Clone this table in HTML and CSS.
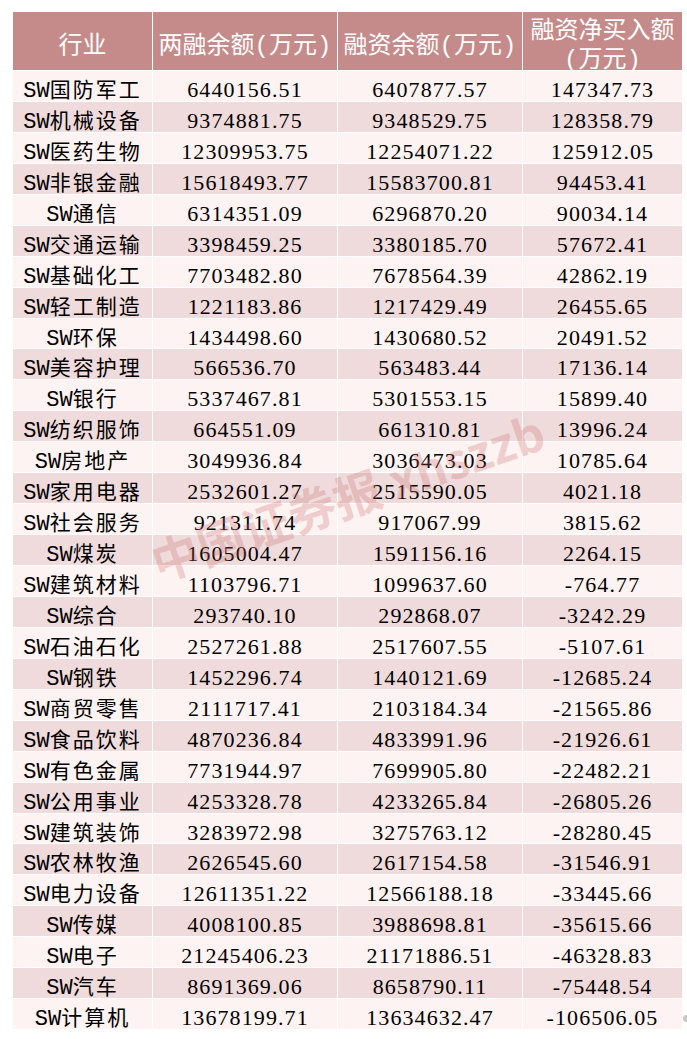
FILE: index.html
```html
<!DOCTYPE html>
<html lang="zh-CN">
<head>
<meta charset="utf-8">
<title>行业两融数据</title>
<link rel="stylesheet" href="styles.css">
</head>
<body>
<div class="wrap">
<table class="data">
<thead>
<tr class="head">
<th class="c1 one">行业</th>
<th class="c2 one">两融余额(万元)</th>
<th class="c3 one">融资余额(万元)</th>
<th class="c4"><div class="two">融资净买入额<br>(万元)</div></th>
</tr>
</thead>
<tbody>
<tr><td class="name"><span class="sw">SW</span>国防军工</td><td>6440156.51</td><td>6407877.57</td><td>147347.73</td></tr>
<tr><td class="name"><span class="sw">SW</span>机械设备</td><td>9374881.75</td><td>9348529.75</td><td>128358.79</td></tr>
<tr><td class="name"><span class="sw">SW</span>医药生物</td><td>12309953.75</td><td>12254071.22</td><td>125912.05</td></tr>
<tr><td class="name"><span class="sw">SW</span>非银金融</td><td>15618493.77</td><td>15583700.81</td><td>94453.41</td></tr>
<tr><td class="name"><span class="sw">SW</span>通信</td><td>6314351.09</td><td>6296870.20</td><td>90034.14</td></tr>
<tr><td class="name"><span class="sw">SW</span>交通运输</td><td>3398459.25</td><td>3380185.70</td><td>57672.41</td></tr>
<tr><td class="name"><span class="sw">SW</span>基础化工</td><td>7703482.80</td><td>7678564.39</td><td>42862.19</td></tr>
<tr><td class="name"><span class="sw">SW</span>轻工制造</td><td>1221183.86</td><td>1217429.49</td><td>26455.65</td></tr>
<tr><td class="name"><span class="sw">SW</span>环保</td><td>1434498.60</td><td>1430680.52</td><td>20491.52</td></tr>
<tr><td class="name"><span class="sw">SW</span>美容护理</td><td>566536.70</td><td>563483.44</td><td>17136.14</td></tr>
<tr><td class="name"><span class="sw">SW</span>银行</td><td>5337467.81</td><td>5301553.15</td><td>15899.40</td></tr>
<tr><td class="name"><span class="sw">SW</span>纺织服饰</td><td>664551.09</td><td>661310.81</td><td>13996.24</td></tr>
<tr><td class="name"><span class="sw">SW</span>房地产</td><td>3049936.84</td><td>3036473.03</td><td>10785.64</td></tr>
<tr><td class="name"><span class="sw">SW</span>家用电器</td><td>2532601.27</td><td>2515590.05</td><td>4021.18</td></tr>
<tr><td class="name"><span class="sw">SW</span>社会服务</td><td>921311.74</td><td>917067.99</td><td>3815.62</td></tr>
<tr><td class="name"><span class="sw">SW</span>煤炭</td><td>1605004.47</td><td>1591156.16</td><td>2264.15</td></tr>
<tr><td class="name"><span class="sw">SW</span>建筑材料</td><td>1103796.71</td><td>1099637.60</td><td>-764.77</td></tr>
<tr><td class="name"><span class="sw">SW</span>综合</td><td>293740.10</td><td>292868.07</td><td>-3242.29</td></tr>
<tr><td class="name"><span class="sw">SW</span>石油石化</td><td>2527261.88</td><td>2517607.55</td><td>-5107.61</td></tr>
<tr><td class="name"><span class="sw">SW</span>钢铁</td><td>1452296.74</td><td>1440121.69</td><td>-12685.24</td></tr>
<tr><td class="name"><span class="sw">SW</span>商贸零售</td><td>2111717.41</td><td>2103184.34</td><td>-21565.86</td></tr>
<tr><td class="name"><span class="sw">SW</span>食品饮料</td><td>4870236.84</td><td>4833991.96</td><td>-21926.61</td></tr>
<tr><td class="name"><span class="sw">SW</span>有色金属</td><td>7731944.97</td><td>7699905.80</td><td>-22482.21</td></tr>
<tr><td class="name"><span class="sw">SW</span>公用事业</td><td>4253328.78</td><td>4233265.84</td><td>-26805.26</td></tr>
<tr><td class="name"><span class="sw">SW</span>建筑装饰</td><td>3283972.98</td><td>3275763.12</td><td>-28280.45</td></tr>
<tr><td class="name"><span class="sw">SW</span>农林牧渔</td><td>2626545.60</td><td>2617154.58</td><td>-31546.91</td></tr>
<tr><td class="name"><span class="sw">SW</span>电力设备</td><td>12611351.22</td><td>12566188.18</td><td>-33445.66</td></tr>
<tr><td class="name"><span class="sw">SW</span>传媒</td><td>4008100.85</td><td>3988698.81</td><td>-35615.66</td></tr>
<tr><td class="name"><span class="sw">SW</span>电子</td><td>21245406.23</td><td>21171886.51</td><td>-46328.83</td></tr>
<tr><td class="name"><span class="sw">SW</span>汽车</td><td>8691369.06</td><td>8658790.11</td><td>-75448.54</td></tr>
<tr><td class="name"><span class="sw">SW</span>计算机</td><td>13678199.71</td><td>13634632.47</td><td>-106506.05</td></tr>
</tbody>
</table>
<div class="watermark">中国证券报 xhszzb</div>
<div class="scroll-dot"></div>
</div>
</body>
</html>
```

FILE: styles.css
```css
html, body {
  margin: 0;
  padding: 0;
  background: #ffffff;
}

.wrap {
  position: relative;
  width: 687px;
  height: 1039px;
  padding: 11px 0 0 12px;
  box-sizing: border-box;
  overflow: hidden;
}

.data {
  border-collapse: separate;
  border-spacing: 1px;
  table-layout: fixed;
  width: 671px;
  background: #ffffff;
}

.c1 { width: 139px; }
.c2 { width: 184px; }
.c3 { width: 184px; }
.c4 { width: 159px; }

.head {
  height: 58px;
}

.head th {
  background: #c58b8a;
  color: #ffffff;
  font-family: "Liberation Mono", "Noto Sans CJK SC", sans-serif;
  font-weight: 400;
  font-size: 24px;
  line-height: 29px;
  padding: 0;
  text-align: center;
  vertical-align: top;
  white-space: nowrap;
}

.head th.one {
  padding-top: 20px;
  height: 38px;
  box-sizing: content-box;
}

.two {
  height: 58px;
  padding-top: 5px;
  box-sizing: border-box;
}

tbody tr {
  height: 29.94px;
}

tbody td {
  padding: 9px 0 0;
  text-align: center;
  vertical-align: top;
  color: #000000;
  font-family: "Liberation Serif", serif;
  font-size: 22px;
  letter-spacing: 1.1px;
  line-height: 20px;
  white-space: nowrap;
}

tbody tr:nth-child(odd) td {
  background: #fdf3f2;
}

tbody tr:nth-child(even) td {
  background: #efdbdb;
}

tbody td.name {
  padding-top: 7px;
  font-family: "Noto Sans CJK SC", sans-serif;
  font-weight: 400;
  font-size: 21px;
  letter-spacing: 2px;
}

.sw {
  font-family: "Liberation Mono", monospace;
  font-weight: 400;
  font-size: 22px;
  letter-spacing: 0;
  line-height: 10px;
}

.watermark {
  position: absolute;
  left: 347px;
  top: 495px;
  transform: translate(-50%, -50%) rotate(-19deg);
  font-family: "Noto Sans CJK SC", sans-serif;
  font-weight: 700;
  font-size: 48px;
  line-height: 1;
  color: rgba(200, 110, 110, 0.28);
  white-space: nowrap;
  pointer-events: none;
}

.scroll-dot {
  position: absolute;
  left: 683px;
  top: 1015px;
  width: 7px;
  height: 7px;
  border-radius: 50%;
  background: #c8c8c8;
}
```
